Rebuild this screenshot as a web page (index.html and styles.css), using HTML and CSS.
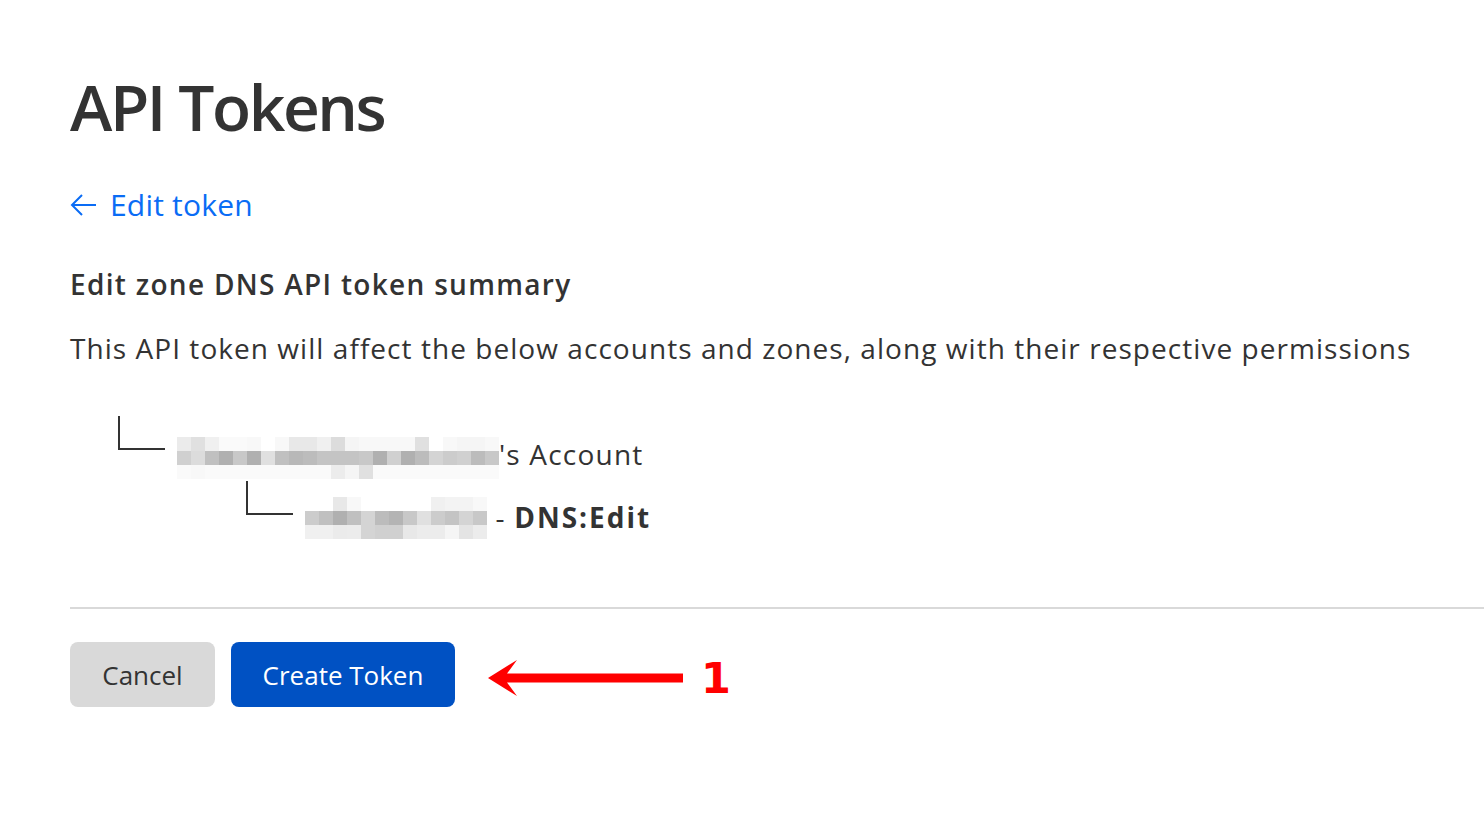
FILE: index.html
```html
<!DOCTYPE html>
<html lang="en">
<head>
<meta charset="utf-8">
<title>API Tokens</title>
<link rel="stylesheet" href="styles.css">
</head>
<body>
<main class="page">
  <h1 class="title">API Tokens</h1>
  <a class="back-link" href="#">
    <svg class="back-icon" width="27" height="24" viewBox="0 0 27 24" aria-hidden="true">
      <path d="M26 12H2M12 2L2 12l10 10" fill="none" stroke="#0a6cf5" stroke-width="2"/>
    </svg>
    <span>Edit token</span>
  </a>
  <h2 class="summary-title">Edit zone DNS API token summary</h2>
  <p class="summary-desc">This API token will affect the below accounts and zones, along with their respective permissions</p>

  <div class="tree">
    <div class="tree-row">
      <span class="elbow"></span>
      <div class="tree-item">
        <div class="pix pix-23">
          <i style="background:#ebebeb"></i><i style="background:#e0e0e0"></i><i style="background:#f0f0f0"></i><i style="background:#fafafa"></i><i style="background:#fafafa"></i><i style="background:#f8f8f8"></i><i style="background:#fff"></i><i style="background:#f8f8f8"></i><i style="background:#e8e8e8"></i><i style="background:#e8e8e8"></i><i style="background:#f0f0f0"></i><i style="background:#dcdcdc"></i><i style="background:#f5f5f5"></i><i style="background:#f8f8f8"></i><i style="background:#f8f8f8"></i><i style="background:#f8f8f8"></i><i style="background:#f8f8f8"></i><i style="background:#e0e0e0"></i><i style="background:#fff"></i><i style="background:#f8f8f8"></i><i style="background:#f5f5f5"></i><i style="background:#f5f5f5"></i><i style="background:#f8f8f8"></i>
          <i style="background:#d0d0d0"></i><i style="background:#dcdcdc"></i><i style="background:#c0c0c0"></i><i style="background:#b0b0b0"></i><i style="background:#c8c8c8"></i><i style="background:#b0b0b0"></i><i style="background:#e0e0e0"></i><i style="background:#c0c0c0"></i><i style="background:#b8b8b8"></i><i style="background:#bcbcbc"></i><i style="background:#c4c4c4"></i><i style="background:#c4c4c4"></i><i style="background:#c4c4c4"></i><i style="background:#c8c8c8"></i><i style="background:#b0b0b0"></i><i style="background:#d0d0d0"></i><i style="background:#b0b0b0"></i><i style="background:#bcbcbc"></i><i style="background:#d4d4d4"></i><i style="background:#cccccc"></i><i style="background:#d0d0d0"></i><i style="background:#bcbcbc"></i><i style="background:#c8c8c8"></i>
          <i style="background:#fafafa"></i><i style="background:#f8f8f8"></i><i style="background:#fafafa"></i><i style="background:#fafafa"></i><i style="background:#fafafa"></i><i style="background:#fafafa"></i><i style="background:#fafafa"></i><i style="background:#fafafa"></i><i style="background:#fafafa"></i><i style="background:#fafafa"></i><i style="background:#fafafa"></i><i style="background:#ececec"></i><i style="background:#f5f5f5"></i><i style="background:#e0e0e0"></i><i style="background:#fafafa"></i><i style="background:#fafafa"></i><i style="background:#fafafa"></i><i style="background:#fafafa"></i><i style="background:#fafafa"></i><i style="background:#fafafa"></i><i style="background:#fafafa"></i><i style="background:#fafafa"></i><i style="background:#fafafa"></i>
        </div>
        <span class="tree-label tree-label-account">'s Account</span>
      </div>
    </div>
    <div class="tree-row tree-row-nested">
      <span class="elbow"></span>
      <div class="tree-item">
        <div class="pix pix-13">
          <i style="background:#fff"></i><i style="background:#fff"></i><i style="background:#e8e8e8"></i><i style="background:#f8f8f8"></i><i style="background:#fff"></i><i style="background:#fff"></i><i style="background:#fff"></i><i style="background:#fff"></i><i style="background:#fff"></i><i style="background:#f0f0f0"></i><i style="background:#f3f3f3"></i><i style="background:#f3f3f3"></i><i style="background:#f8f8f8"></i>
          <i style="background:#cccccc"></i><i style="background:#c0c0c0"></i><i style="background:#b0b0b0"></i><i style="background:#c0c0c0"></i><i style="background:#d4d4d4"></i><i style="background:#bcbcbc"></i><i style="background:#b4b4b4"></i><i style="background:#c8c8c8"></i><i style="background:#e0e0e0"></i><i style="background:#cccccc"></i><i style="background:#c4c4c4"></i><i style="background:#d4d4d4"></i><i style="background:#c8c8c8"></i>
          <i style="background:#f0f0f0"></i><i style="background:#f0f0f0"></i><i style="background:#ebebeb"></i><i style="background:#ececec"></i><i style="background:#d4d4d4"></i><i style="background:#d0d0d0"></i><i style="background:#d0d0d0"></i><i style="background:#e8e8e8"></i><i style="background:#ececec"></i><i style="background:#ececec"></i><i style="background:#f5f5f5"></i><i style="background:#e4e4e4"></i><i style="background:#ececec"></i>
        </div>
        <span class="tree-label tree-label-perm"> - <strong>DNS:Edit</strong></span>
      </div>
    </div>
  </div>

  <hr class="divider">

  <div class="actions">
    <button class="btn btn-cancel" type="button">Cancel</button>
    <button class="btn btn-primary" type="button">Create Token</button>
    <div class="annotation">
      <svg class="annotation-arrow" width="196" height="40" viewBox="0 0 196 40" aria-hidden="true">
        <polygon points="0,20 29,2 19,15.5 195,15.5 195,24.5 19,24.5 29,38" fill="#ff0000"/>
      </svg>
      <span class="annotation-num">1</span>
    </div>
  </div>
</main>
</body>
</html>
```

FILE: styles.css
```css
* { box-sizing: border-box; }

html, body {
  margin: 0;
  padding: 0;
  background: #ffffff;
}

body {
  font-family: "Open Sans", "Noto Sans", "DejaVu Sans", sans-serif;
  color: #333333;
}

.page {
  padding: 67px 0 0 70px;
  display: flex;
  flex-direction: column;
  align-items: flex-start;
}

.title {
  margin: 0;
  font-size: 64px;
  font-weight: 600;
  line-height: 80px;
  letter-spacing: -2.4px;
  color: #333333;
}

.back-link {
  margin-top: 38px;
  display: flex;
  align-items: center;
  gap: 13px;
  color: #0a6cf5;
  text-decoration: none;
  font-size: 30px;
  line-height: 40px;
  letter-spacing: 0.2px;
}

.back-icon { display: block; }

.summary-title {
  margin: 39px 0 0;
  font-size: 28px;
  font-weight: 600;
  line-height: 40px;
  letter-spacing: 1.3px;
  color: #333333;
}

.summary-desc {
  margin: 24px 0 0;
  font-size: 28px;
  line-height: 40px;
  letter-spacing: 1.05px;
  white-space: nowrap;
  color: #333333;
}

.tree {
  margin-top: 48px;
  margin-left: 48px;
  display: flex;
  flex-direction: column;
  gap: 2px;
}

.tree-row {
  display: flex;
  align-items: flex-start;
}

.tree-row-nested { margin-left: 128px; }

.elbow {
  flex: none;
  width: 47px;
  height: 34px;
  border-left: 2px solid #333333;
  border-bottom: 2px solid #333333;
}

.tree-item {
  margin-top: 21px;
  margin-left: 12px;
  display: flex;
  align-items: flex-start;
}

.tree-row-nested .tree-item { margin-top: 16px; }

.pix {
  display: grid;
  grid-auto-rows: 14px;
}

.pix i { display: block; }

.pix-23 { grid-template-columns: repeat(23, 14px); }
.pix-13 { grid-template-columns: repeat(13, 14px); }

.tree-label {
  font-size: 28px;
  letter-spacing: 1.2px;
  color: #333333;
  white-space: pre;
}

.tree-label-account { line-height: 34px; }
.tree-label-perm { line-height: 40px; }

.tree-label strong {
  font-weight: 700;
  letter-spacing: 2px;
}

.divider {
  align-self: stretch;
  margin: 68px 0 0;
  border: 0;
  border-top: 2px solid #d9d9d9;
  height: 0;
}

.actions {
  margin-top: 33px;
  display: flex;
  align-items: center;
  gap: 16px;
}

.btn {
  height: 65px;
  border: 0;
  border-radius: 8px;
  font-family: inherit;
  font-size: 26px;
  padding: 0;
  white-space: nowrap;
  cursor: pointer;
}

.btn-cancel {
  width: 145px;
  background: #d9d9d9;
  color: #333333;
}

.btn-primary {
  width: 224px;
  background: #0051c3;
  color: #ffffff;
}

.annotation {
  margin-left: 17px;
  margin-top: 7px;
  display: flex;
  align-items: center;
  gap: 17px;
}

.annotation-arrow { display: block; }

.annotation-num {
  font-family: "DejaVu Sans", sans-serif;
  font-weight: 700;
  font-size: 43px;
  line-height: 1;
  color: #ff0000;
}
```
